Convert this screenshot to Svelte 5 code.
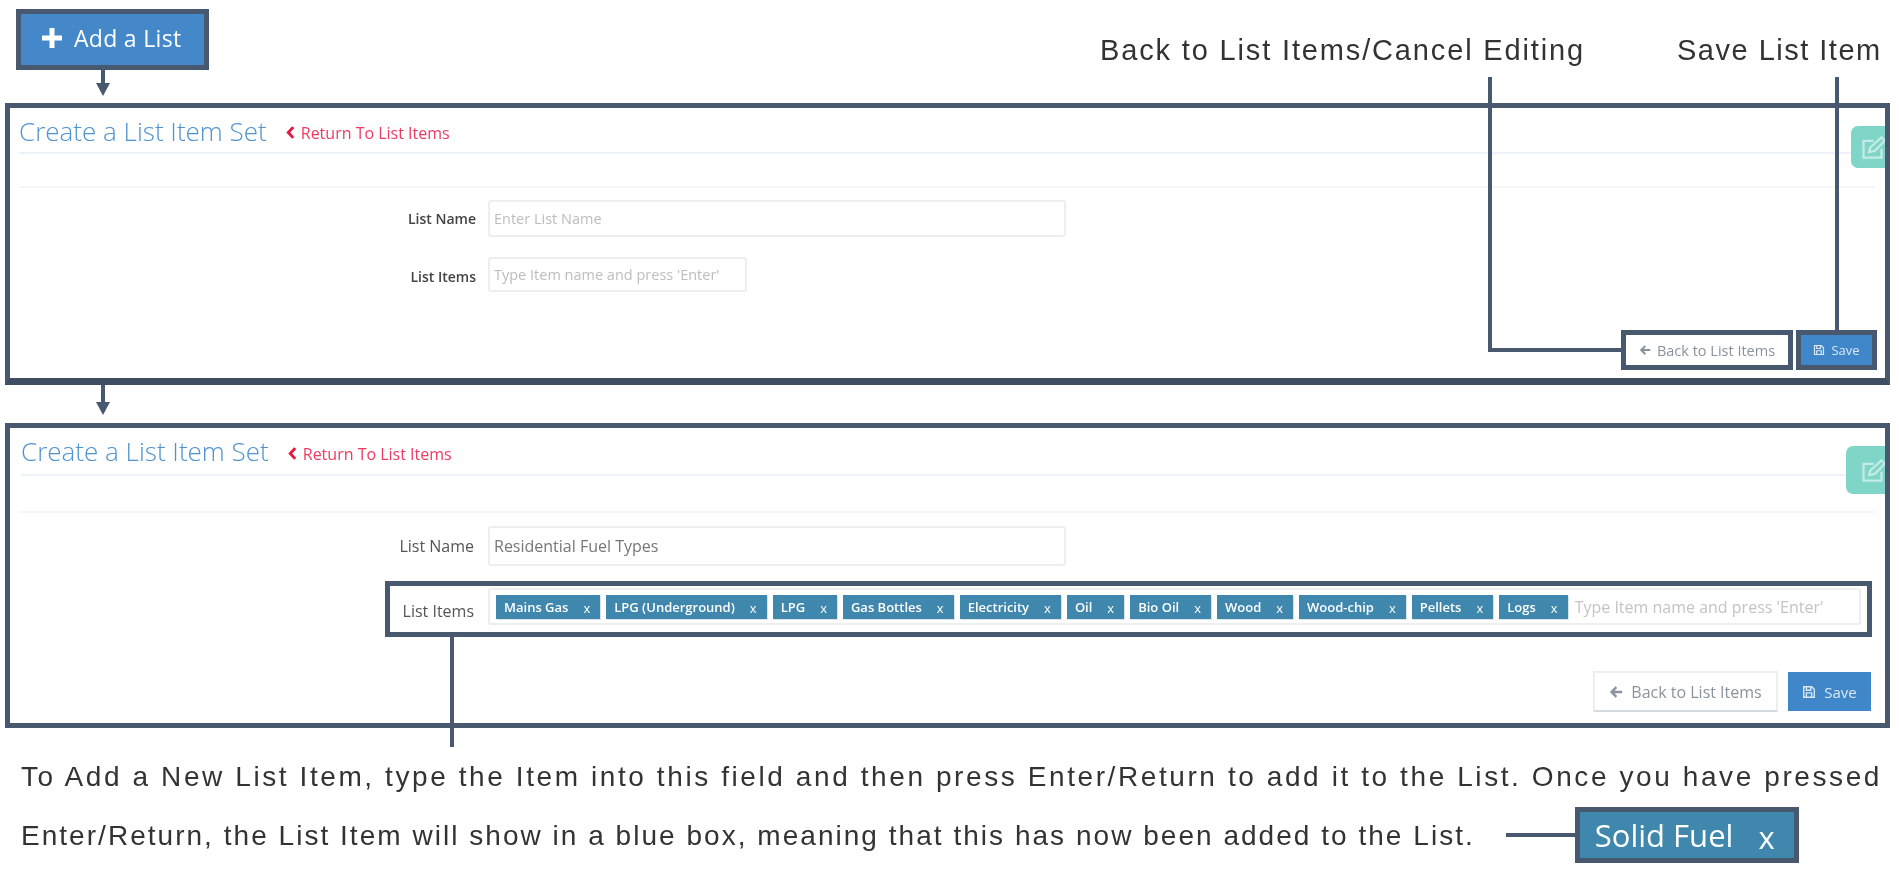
<script>
	const tags = ['Mains Gas', 'LPG (Underground)', 'LPG', 'Gas Bottles', 'Electricity', 'Oil', 'Bio Oil', 'Wood', 'Wood-chip', 'Pellets', 'Logs'];
</script>

{#snippet tabIcon()}
	<svg viewBox="0 0 24 24" fill="none" stroke="currentColor" stroke-width="2">
		<path d="M20 13v8H4V6h9" />
		<path d="M9 16l1-4L20 3l3 3-9 9z" />
	</svg>
{/snippet}

{#snippet saveIcon()}
	<svg class="btn-icon" viewBox="0 0 16 16" fill="none" stroke="currentColor" stroke-width="1.6">
		<path d="M2 2h9l3 3v9H2z" />
		<path d="M5 2v4h5V2M5 14v-5h6v5" />
	</svg>
{/snippet}

{#snippet backIcon()}
	<svg class="btn-icon" viewBox="0 0 16 16" fill="currentColor">
		<path d="M7.500 1.500 1 8l6.500 6.500 1.800-1.800L6.400 9.400H15V6.600H6.400l2.900-3.300z" />
	</svg>
{/snippet}

{#snippet chevron()}
	<svg class="chev" viewBox="0 0 10 16" fill="none" stroke="currentColor" stroke-width="3.200">
		<path d="M8 2 2.500 8 8 14" />
	</svg>
{/snippet}

{#snippet arrow(h)}
	<svg class="arrow" width="14" height={h} viewBox="0 0 14 {h}">
		<path d="M5 0h4v{h - 13}h5l-7 13-7-13h5z" />
	</svg>
{/snippet}

<div class="page">
	<header class="top">
		<div class="add-btn">
			<svg viewBox="0 0 20 20"><path d="M7.500 0h5v7.500H20v5h-7.500V20h-5v-7.500H0v-5h7.500z" /></svg>
			<span>Add a List</span>
		</div>
		<div class="callout back-label">Back to List Items/Cancel Editing</div>
		<div class="callout save-label">Save List Item</div>
	</header>
	<div class="arrow-row first">{@render arrow(26)}</div>

	<section class="panel one">
		<div class="panel-head">
			<h2>Create a List Item Set</h2>
			<a class="return">{@render chevron()}Return To List Items</a>
		</div>
		<div class="panel-sub"></div>
		<div class="tab">{@render tabIcon()}</div>
		<div class="row name-row">
			<span class="label">List Name</span>
			<div class="field wide placeholder">Enter List Name</div>
		</div>
		<div class="row items-row">
			<span class="label">List Items</span>
			<div class="field short placeholder">Type Item name and press 'Enter'</div>
		</div>
		<div class="actions">
			<div class="btn back outlined">{@render backIcon()}Back to List Items</div>
			<div class="btn save outlined">{@render saveIcon()}Save</div>
		</div>
	</section>

	<div class="arrow-row second">{@render arrow(30)}</div>

	<section class="panel two">
		<div class="panel-head">
			<h2>Create a List Item Set</h2>
			<a class="return">{@render chevron()}Return To List Items</a>
		</div>
		<div class="panel-sub"></div>
		<div class="tab">{@render tabIcon()}</div>
		<div class="row name-row">
			<span class="label">List Name</span>
			<div class="field wide value">Residential Fuel Types</div>
		</div>
		<div class="row items-row">
			<span class="label">List Items</span>
			<div class="field tags">
				{#each tags as tag}
					<span class="tag">{tag}<i>x</i></span>
				{/each}
				<span class="placeholder">Type Item name and press 'Enter'</span>
			</div>
		</div>
		<div class="actions">
			<div class="btn back">{@render backIcon()}Back to List Items</div>
			<div class="btn save">{@render saveIcon()}Save</div>
		</div>
	</section>

	<p class="line first-line">To Add a New List Item, type the Item into this field and then press Enter/Return to add it to the List. Once you have pressed</p>
	<div class="last-row">
		<p class="line second-line">Enter/Return, the List Item will show in a blue box, meaning that this has now been added to the List.</p>
		<span class="dash"></span>
		<div class="solid-tag">Solid Fuel<i>x</i></div>
	</div>

	<!-- callout leader lines -->
	<span class="lead back-v"></span>
	<span class="lead back-h"></span>
	<span class="lead save-v"></span>
	<span class="frame"></span>
	<span class="lead items-v"></span>
</div>

<style>
	:global(body) {
		background: #fff;
	}

	.page {
		position: relative;
		width: 1899px;
		height: 873px;
		overflow: hidden;
		background: #fff;
		font-family: 'Open Sans', sans-serif;
		filter: blur(0.5px);
		--slate: #47586f;
		--blue: #4588c9;
	}

	.top {
		display: flex;
		align-items: flex-start;
		height: 70px;
		padding: 9px 0 0 16px;
		box-sizing: border-box;
	}

	.add-btn {
		display: flex;
		align-items: center;
		gap: 12px;
		width: 193px;
		height: 61px;
		box-sizing: border-box;
		padding: 0 0 4px 21px;
		background: var(--blue);
		border: 5px solid var(--slate);
		color: #fff;
		font-size: 23px;
		letter-spacing: 0.3px;
		white-space: nowrap;
	}

	.add-btn svg {
		width: 20px;
		height: 20px;
		fill: #fff;
	}

	.callout {
		font-family: 'Liberation Sans', sans-serif;
		font-size: 29px;
		line-height: 34px;
		color: #333;
		margin-top: 24px;
		white-space: nowrap;
	}

	.back-label {
		margin-left: 891px;
		letter-spacing: 1.85px;
	}

	.save-label {
		margin-left: 92px;
		letter-spacing: 1.5px;
	}

	.arrow-row {
		padding-left: 96px;
	}

	.arrow-row.first {
		height: 33px;
	}

	.arrow-row.second {
		height: 38px;
	}

	.arrow {
		display: block;
		fill: var(--slate);
	}

	.panel {
		position: relative;
		box-sizing: border-box;
		margin: 0 9px 0 5px;
		border: 5px solid var(--slate);
		overflow: hidden;
	}

	.panel.one {
		height: 282px;
		border-bottom: 7px solid #3f4d62;
	}

	.panel.two {
		height: 305px;
	}

	.panel-head {
		display: flex;
		align-items: center;
		gap: 19px;
		box-sizing: border-box;
		margin: 0 10px 0 9px;
		border-bottom: 2px solid #edf3f8;
	}

	.one .panel-head {
		height: 46px;
	}

	.two .panel-head {
		height: 48px;
		margin-left: 11px;
	}

	h2 {
		margin: 0;
		font-size: 26px;
		font-weight: 300;
		color: #4f93d0;
		white-space: nowrap;
	}

	.one h2 {
		padding-top: 1px;
	}

	.two h2 {
		margin-top: -1px;
	}

	.return {
		display: flex;
		align-items: center;
		gap: 6px;
		margin-top: 5px;
		font-size: 16px;
		color: #ef3a62;
		white-space: nowrap;
	}

	.chev {
		width: 9px;
		height: 15px;
		color: #e8163f;
	}

	.panel-sub {
		margin: 0 10px 0 9px;
		border-bottom: 2px solid #f5f6f6;
	}

	.one .panel-sub {
		height: 32px;
	}

	.two .panel-sub {
		height: 35px;
	}

	.tab {
		position: absolute;
		right: 0;
		display: flex;
		align-items: center;
		justify-content: flex-end;
		background: #80d5c9;
		border-radius: 7px 0 0 7px;
		color: #c4ebe5;
	}

	.one .tab {
		top: 18px;
		width: 34px;
		height: 42px;
	}

	.two .tab {
		top: 18px;
		width: 39px;
		height: 48px;
	}

	.tab svg {
		width: 27px;
		height: 27px;
		margin-right: -1px;
	}

	.row {
		display: flex;
		align-items: center;
		gap: 12px;
		padding-left: 466px;
	}

	.label {
		width: 100px;
		margin-left: -100px;
		flex: none;
		text-align: right;
		white-space: nowrap;
		font-size: 14px;
		font-weight: 600;
		color: #444;
	}

	.field {
		display: flex;
		align-items: center;
		box-sizing: border-box;
		border: 2px solid #eeeeee;
		border-radius: 3px;
		padding: 0 4px;
		font-size: 14.500px;
		color: #bdbdbd;
		white-space: nowrap;
	}

	.field.wide {
		width: 578px;
	}

	.one .name-row {
		margin-top: 12px;
	}

	.one .name-row .field {
		height: 37px;
	}

	.one .items-row {
		margin-top: 20px;
	}

	.one .items-row .label {
		margin-top: 3px;
	}

	.one .items-row .field {
		width: 259px;
		height: 35px;
	}

	.two .name-row {
		margin-top: 13px;
	}

	.two .name-row .field {
		height: 40px;
	}

	.two .label {
		width: 98px;
		margin-right: 2px;
		font-weight: 400;
		color: #555;
		font-size: 16px;
	}

	.two .items-row {
		margin-top: 22px;
	}

	.two .items-row .label {
		margin-top: 9px;
	}

	.value {
		font-size: 16px;
		color: #777;
	}

	.field.tags {
		width: 1373px;
		height: 37px;
		gap: 6px;
		padding: 0 6px;
	}

	.tag {
		display: flex;
		align-items: center;
		justify-content: space-between;
		box-sizing: border-box;
		height: 24px;
		gap: 15px;
		padding: 0 10px 0 8px;
		background: #3f87ad;
		color: #fff;
		font-size: 13px;
		font-weight: 600;
		white-space: nowrap;
		box-shadow: 1px 1px 0 #d9e4ea;
	}

	.tag i {
		font-style: normal;
		font-weight: 400;
		margin-top: 3px;
	}

	.tags .placeholder {
		margin-left: 1px;
		color: #c4c4c4;
		font-size: 16px;
		white-space: nowrap;
	}

	.actions {
		position: absolute;
		display: flex;
		align-items: center;
	}

	.one .actions {
		right: 8px;
		bottom: 8px;
		gap: 3px;
	}

	.two .actions {
		right: 14px;
		bottom: 11px;
		gap: 10px;
	}

	.btn {
		display: flex;
		align-items: center;
		justify-content: center;
		gap: 6px;
		box-sizing: border-box;
		white-space: nowrap;
	}

	.btn-icon {
		width: 12px;
		height: 12px;
		flex: none;
	}

	.btn.back {
		background: #fff;
		color: #8a939d;
	}

	.btn.save {
		background: #3f87c9;
		color: #dbe8f4;
	}

	.one .btn {
		height: 40px;
		border: 5px solid var(--slate);
	}

	.one .back {
		width: 172px;
		font-size: 14.500px;
	}

	.one .save {
		width: 81px;
		font-size: 13px;
	}

	.two .btn {
		height: 41px;
		gap: 8px;
	}

	.two .btn-icon {
		width: 14px;
		height: 14px;
	}

	.two .back {
		width: 185px;
		font-size: 16px;
		border: 2px solid #eceef0;
		border-bottom-color: #d5dae0;
	}

	.two .save {
		width: 83px;
		height: 39px;
		font-size: 15px;
	}

	.line {
		margin: 0;
		font-family: 'Liberation Sans', sans-serif;
		color: #333;
		white-space: nowrap;
	}

	.first-line {
		margin: 31px 0 0 21px;
		font-size: 28px;
		line-height: 36px;
		letter-spacing: 2.590px;
	}

	.last-row {
		display: flex;
		align-items: center;
		margin: 8px 0 0 21px;
		height: 63px;
	}

	.second-line {
		padding-top: 3px;
		font-size: 28px;
		line-height: 36px;
		letter-spacing: 2.030px;
	}

	.dash {
		width: 69px;
		height: 4px;
		margin-left: 31px;
		background: var(--slate);
	}

	.solid-tag {
		display: flex;
		align-items: center;
		justify-content: space-between;
		box-sizing: border-box;
		width: 224px;
		height: 56px;
		padding: 0 19px 0 15px;
		background: #3f87ad;
		border: 5px solid var(--slate);
		color: #fff;
		font-size: 31px;
		white-space: nowrap;
	}

	.solid-tag i {
		font-style: normal;
		margin-top: 5px;
	}

	.lead {
		position: absolute;
		background: var(--slate);
	}

	.back-v {
		left: 1488px;
		top: 77px;
		width: 4px;
		height: 275px;
	}

	.back-h {
		left: 1488px;
		top: 348px;
		width: 135px;
		height: 4px;
	}

	.save-v {
		left: 1835px;
		top: 77px;
		width: 4px;
		height: 255px;
	}

	.items-v {
		left: 450px;
		top: 637px;
		width: 4px;
		height: 110px;
	}

	.frame {
		position: absolute;
		left: 385px;
		top: 581px;
		width: 1487px;
		height: 56px;
		box-sizing: border-box;
		border: 5px solid var(--slate);
	}
</style>
